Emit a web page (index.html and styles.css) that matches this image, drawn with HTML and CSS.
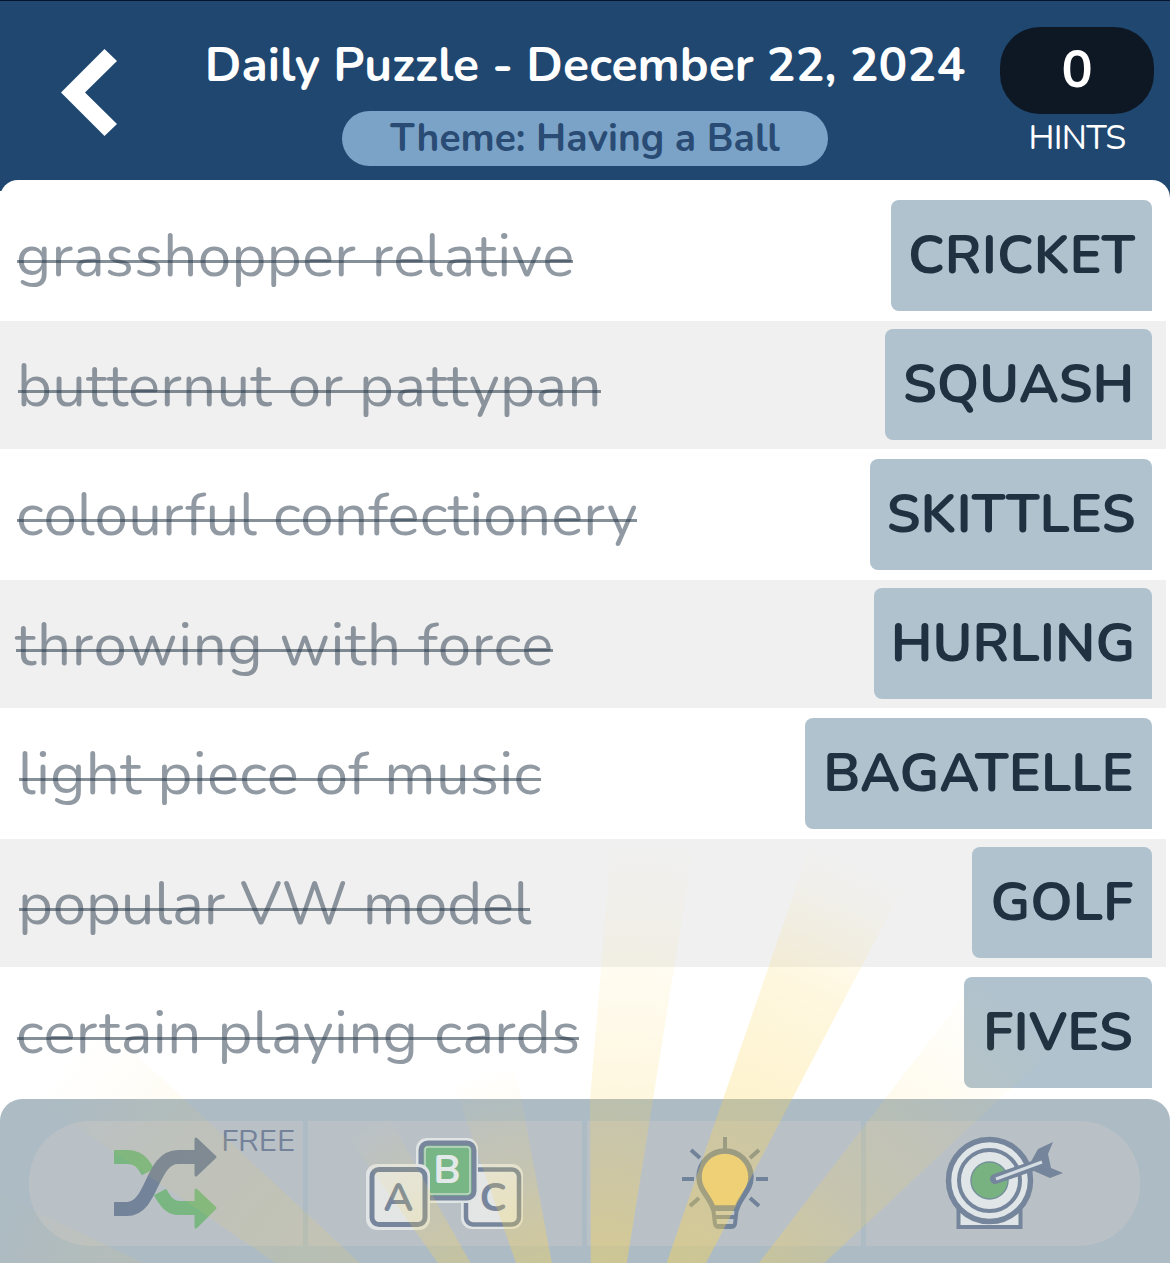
FILE: index.html
```html
<!DOCTYPE html>
<html lang="en">
<head>
    <meta charset="UTF-8">
    <meta name="viewport" content="width=device-width, initial-scale=1.0">
    <title>Daily Puzzle</title>
    <link rel="stylesheet" href="styles.css">
</head>
<body>
    <div class="game">
        <header class="header">
            <button class="back" aria-label="Back">
                <svg width="56" height="87" viewBox="0 0 56 87"><path d="M43.500 0L56 12L24 43.500L56 75L43.500 87L0 43.500Z" fill="#fff"/></svg>
            </button>
            <div class="heading">
                <h1>Daily Puzzle - December 22, 2024</h1>
                <div class="theme"><span>Theme: Having a Ball</span></div>
            </div>
            <div class="hints">
                <div class="hint-count">0</div>
                <div class="hint-label">HINTS</div>
            </div>
        </header>

        <main class="clues">
            <div class="row"><span class="clue c1">grasshopper relative</span><span class="answer a1">CRICKET</span></div>
            <div class="row"><span class="clue c2">butternut or pattypan</span><span class="answer a2">SQUASH</span></div>
            <div class="row"><span class="clue c3">colourful confectionery</span><span class="answer a3">SKITTLES</span></div>
            <div class="row"><span class="clue c4">throwing with force</span><span class="answer a4">HURLING</span></div>
            <div class="row"><span class="clue c5">light piece of music</span><span class="answer a5">BAGATELLE</span></div>
            <div class="row"><span class="clue c6">popular VW model</span><span class="answer a6">GOLF</span></div>
            <div class="row"><span class="clue c7">certain playing cards</span><span class="answer a7">FIVES</span></div>
        </main>

        <footer class="toolbar">
            <div class="tools">
                <button class="tool shuffle" aria-label="Shuffle">
                    <svg width="104" height="94" viewBox="0 0 104 94">
                        <g fill="none" stroke-width="14">
                            <path d="M0 21H13C23 21 28 25 34 36M46 56C52 67 57 72 65 72H84" stroke="#79b682"/>
                            <path d="M0 73H13C39 73 37 21 64 21H84" stroke="#73839a"/>
                        </g>
                        <path d="M82 3L101 21L82 39Z" fill="#73839a" stroke="#73839a" stroke-width="3" stroke-linejoin="round"/>
                        <path d="M82 54L101 72L82 91Z" fill="#79b682" stroke="#79b682" stroke-width="3" stroke-linejoin="round"/>
                    </svg>
                    <span class="free">FREE</span>
                </button>
                <button class="tool letters" aria-label="Letters">
                    <svg width="158" height="92" viewBox="0 0 158 92">
                        <rect x="95" y="26" width="62" height="65" rx="11" fill="#e0e4e5"/>
                        <rect x="100" y="31.500" width="53" height="55" rx="7" fill="#e3e6e5" stroke="#77869c" stroke-width="4.500"/>
                        <rect x="50" y="0" width="62" height="65" rx="11" fill="#e0e4e5"/>
                        <rect x="55" y="5" width="53" height="55" rx="7" fill="#79b685" stroke="#77869c" stroke-width="5"/>
                        <rect x="59" y="9" width="45" height="47" rx="3" fill="none" stroke="#c3d9c9" stroke-width="1.500"/>
                        <rect x="0" y="26" width="64" height="66" rx="11" fill="#e0e4e5"/>
                        <rect x="6" y="31.500" width="53" height="55" rx="7" fill="#e3e6e5" stroke="#77869c" stroke-width="5"/>
                        <text x="32.500" y="73" fill="#77869c">A</text>
                        <text x="81" y="45" fill="#e3e8e8">B</text>
                        <text x="127" y="73" fill="#77869c">C</text>
                    </svg>
                </button>
                <button class="tool bulb" aria-label="Reveal letter">
                    <svg width="86" height="93" viewBox="0 0 86 93" fill="none" stroke="#71839a">
                        <path d="M31 71C27 59 17 53 17 40A26 26 0 0 1 69 40C69 53 59 59 55 71Z" fill="#e8ce8a" stroke-width="5.500"/>
                        <path d="M31 70L33 88Q34 91 37 91H49Q52 91 53 88L55 70Z" fill="#c2c8c9" stroke="none"/>
                        <path d="M31 70L33 87Q34 90 37 90H49Q52 90 53 87L55 70M31 72H55M32 80H54M35 89H51" stroke-width="4"/>
                        <path d="M43 0V12M9 13L18 21M77 13L68 21M0 42H12M74 42H86M8 69L17 61M77 69L68 61" stroke-width="4"/>
                    </svg>
                </button>
                <button class="tool target" aria-label="Solve clue">
                    <svg width="120" height="94" viewBox="0 0 120 94">
                        <path d="M14.500 62V91H76.500V62" fill="#e0e5e7" stroke="#75859c" stroke-width="4"/>
                        <circle cx="45.500" cy="44.500" r="41" fill="#e0e5e7" stroke="#75859c" stroke-width="5.500"/>
                        <circle cx="45.500" cy="44.500" r="30.500" fill="#e0e5e7" stroke="#75859c" stroke-width="4"/>
                        <circle cx="45.500" cy="44.500" r="18.500" fill="#79b281" stroke="#75919a" stroke-width="1.500"/>
                        <path d="M51 43L89 30" stroke="#75859c" stroke-width="10" stroke-linecap="round"/>
                        <path d="M84 31L94 13L109 6L104 18L107 32L119 37L106 42L90 35Z" fill="#75859c"/>
                        <path d="M52 43L98 26" stroke="#d5dde4" stroke-width="3"/>
                    </svg>
                </button>
            </div>
        </footer>

        <!-- sun rays over the lower half -->
        <svg class="rays" width="1170" height="463" viewBox="0 800 1170 463">
            <defs>
                <radialGradient id="glow" gradientUnits="userSpaceOnUse" cx="592" cy="1480" r="670">
                    <stop offset="0.300" stop-color="#f9d553" stop-opacity="0.450"/>
                    <stop offset="0.580" stop-color="#fbd34c" stop-opacity="0.280"/>
                    <stop offset="0.800" stop-color="#fbd34c" stop-opacity="0.180"/>
                    <stop offset="0.950" stop-color="#fbd34c" stop-opacity="0.030"/>
                    <stop offset="1" stop-color="#fbd34c" stop-opacity="0"/>
                </radialGradient>
                <radialGradient id="glow-mid" gradientUnits="userSpaceOnUse" cx="592" cy="1480" r="640">
                    <stop offset="0.340" stop-color="#f9d553" stop-opacity="0.420"/>
                    <stop offset="0.600" stop-color="#fbd34c" stop-opacity="0.180"/>
                    <stop offset="0.800" stop-color="#fbd34c" stop-opacity="0.080"/>
                    <stop offset="1" stop-color="#fbd34c" stop-opacity="0"/>
                </radialGradient>
                <radialGradient id="glow-short" gradientUnits="userSpaceOnUse" cx="592" cy="1480" r="420">
                    <stop offset="0.500" stop-color="#f9d553" stop-opacity="0.400"/>
                    <stop offset="0.750" stop-color="#f9d553" stop-opacity="0.180"/>
                    <stop offset="1" stop-color="#f9d553" stop-opacity="0"/>
                </radialGradient>
            </defs>
            <path d="M592 1480L826 800H949Z" fill="url(#glow)"/>
            <path d="M592 1480L590 1100L615 800H701Z" fill="url(#glow-mid)"/>
            <path d="M592 1480L1115 800H1170V940Z" fill="url(#glow-mid)"/>
            <g fill="url(#glow)" class="ray-faint">
                <path d="M592 1480L0 1074V927Z"/>
                <path d="M592 1480L0 1194V1320Z"/>
            </g>
            <g fill="url(#glow-short)">
                <path d="M592 1480L354 800H466Z"/>
                <path d="M592 1480L109 800H211Z"/>
            </g>
        </svg>
    </div>
</body>
</html>
```
FILE: styles.css
```css
* {
    box-sizing: border-box;
}
body {
    margin: 0;
    background: #1f4770;
    font-family: Nunito, Lato, sans-serif;
}
button {
    border: none;
    padding: 0;
    background: none;
    font: inherit;
}
svg {
    display: block;
}
.game {
    position: relative;
    width: 1170px;
    height: 1263px;
    overflow: hidden;
    display: flex;
    flex-direction: column;
}

/* header */
.header {
    height: 180px;
    border-top: 1px solid #08132f;
    display: grid;
    grid-template-columns: 170px 830px 154px;
    align-items: start;
}
.back {
    margin: 48px 0 0 61px;
}
.heading {
    display: flex;
    flex-direction: column;
    align-items: center;
}
h1 {
    margin: 34px 0 0;
    height: 60px;
    line-height: 60px;
    font-size: 48px;
    font-weight: 700;
    color: #fff;
    white-space: nowrap;
    letter-spacing: 0.1px;
}
.theme {
    margin-top: 16px;
    width: 486px;
    height: 55px;
    line-height: 56px;
    border-radius: 28px;
    background: #7aa3c7;
    color: #294b74;
    font-size: 39px;
    font-weight: 700;
    text-align: center;
}
.hints {
    padding-top: 26px;
    text-align: center;
    color: #fff;
}
.hint-count {
    height: 87px;
    line-height: 86px;
    border-radius: 40px;
    background: #0e1825;
    font-size: 52px;
    font-weight: 700;
}
.hint-label {
    line-height: 48px;
    font-size: 34px;
    letter-spacing: -0.7px;
}

/* clue list */
.clues {
    height: 945px;
    flex-shrink: 0;
    padding: 11px 4px 0 0;
    border-radius: 18px 18px 0 0;
    background: #fff;
}
.row {
    height: 129.5px;
    border-bottom: 1px solid #fff;
    padding-right: 14px;
    display: flex;
    justify-content: space-between;
    align-items: center;
    background: #fff;
}
.row:nth-child(even) {
    background: #f0f0f0;
}
.clue {
    position: relative;
    margin-left: 18px;
    padding-top: 2px;
    font-size: 60px;
    line-height: 90px;
    white-space: nowrap;
    color: rgba(35, 52, 70, 0.5);
}
.clue::after {
    content: "";
    position: absolute;
    left: 1px;
    right: 1px;
    top: 51px;
    height: 3px;
    background: rgba(35, 52, 70, 0.55);
}
.c1 { margin-left: 16px; letter-spacing: 0.3px; }
.c2 { margin-left: 17px; letter-spacing: 0.35px; }
.c3 { margin-left: 16px; letter-spacing: 0.2px; }
.c4 { margin-left: 15px; letter-spacing: 0.65px; }
.c5 { letter-spacing: 0.33px; }
.c6 { letter-spacing: -0.15px; }
.c7 { margin-left: 16px; letter-spacing: 0.38px; }
.answer {
    height: 111px;
    line-height: 111px;
    border-radius: 8px 8px 0 8px;
    background: #b0c2ce;
    color: #203141;
    font-size: 54px;
    font-weight: 700;
    text-align: center;
}
.a1 { width: 261px; }
.a2 { width: 267px; }
.a3 { width: 282px; }
.a4 { width: 278px; }
.a5 { width: 347px; }
.a6 { width: 180px; }
.a7 { width: 188px; }

/* toolbar */
.toolbar {
    position: relative;
    flex-shrink: 0;
    height: 164px;
    margin-top: -26px;
    padding: 22px 30px 0 29px;
    border-radius: 22px 22px 0 0;
    background: #adbbc4;
}
.tools {
    height: 125px;
    display: grid;
    grid-template-columns: repeat(4, 1fr);
    gap: 5px;
    border-radius: 61px;
    overflow: hidden;
}
.tool {
    position: relative;
    display: flex;
    align-items: flex-start;
    background: #bac1c6;
}
.shuffle {
    padding: 15px 0 0 85px;
}
.letters {
    padding: 17px 0 0 58px;
}
.letters text {
    font-family: Nunito, Lato, sans-serif;
    font-size: 40px;
    font-weight: 700;
    text-anchor: middle;
}
.bulb {
    padding: 16px 0 0 95px;
}
.target {
    padding: 15px 0 0 78px;
}
.free {
    position: absolute;
    top: 4px;
    right: 8px;
    font-size: 31px;
    line-height: 32px;
    color: #74829a;
}

.rays {
    position: absolute;
    left: 0;
    bottom: 0;
    pointer-events: none;
}
.ray-faint {
    opacity: 0.45;
}
```
